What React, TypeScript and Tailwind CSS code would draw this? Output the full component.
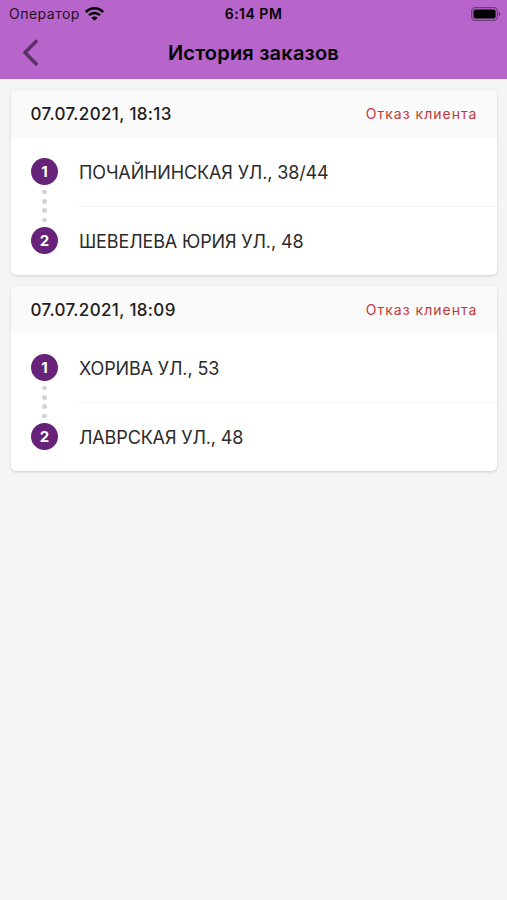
const orders = [
  {
    date: '07.07.2021, 18:13',
    status: 'Отказ клиента',
    route: ['ПОЧАЙНИНСКАЯ УЛ., 38/44', 'ШЕВЕЛЕВА ЮРИЯ УЛ., 48'],
  },
  {
    date: '07.07.2021, 18:09',
    status: 'Отказ клиента',
    route: ['ХОРИВА УЛ., 53', 'ЛАВРСКАЯ УЛ., 48'],
  },
]

type Order = (typeof orders)[number]

function WifiIcon() {
  return (
    <svg width="19" height="14" viewBox="0 0 19 14" fill="none" stroke="#000">
      <path d="M0.9 5C5.6 0 13.4 0 18.1 5" strokeWidth="2.6" />
      <path d="M4 8.2C7.1 5.2 11.9 5.2 15 8.2" strokeWidth="2.4" />
      <path d="M6.4 10.7C8.2 9.1 10.8 9.1 12.6 10.7L9.5 13.7Z" fill="#000" stroke="none" />
    </svg>
  )
}

function BatteryIcon() {
  return (
    <svg width="31" height="14" viewBox="0 0 31 14" fill="none">
      <rect x="0.6" y="0.6" width="25.8" height="12.8" rx="3.6" stroke="#000" strokeOpacity="0.4" strokeWidth="1.2" />
      <rect x="2.4" y="2.4" width="22.2" height="9.2" rx="2" fill="#000" />
      <path d="M27.8 4.8C29.8 5.5 29.8 8.5 27.8 9.2Z" fill="#000" fillOpacity="0.45" />
    </svg>
  )
}

function StatusBar() {
  return (
    <div className="grid h-[27px] grid-cols-[1fr_80px_1fr] items-center pl-[9px] pr-[5px] text-sm text-black/85">
      <div className="flex items-center gap-[5px]">
        <span className="tracking-[0.5px]">Оператор</span>
        <WifiIcon />
      </div>
      <div className="-ml-[4px] pt-px text-center text-sm font-semibold tracking-[0.5px] text-black">6:14 PM</div>
      <div className="flex justify-end">
        <BatteryIcon />
      </div>
    </div>
  )
}

function Header() {
  return (
    <header className="h-[79px] bg-[#b765cb]">
      <StatusBar />
      <div className="grid h-[51px] grid-cols-[60px_1fr_60px] items-center">
        <button className="pl-[22px]" aria-label="Назад">
          <svg width="18" height="28" viewBox="0 0 18 28" fill="none">
            <path d="M14 2.5L3 13.5L14 24.8" stroke="#5c3069" strokeWidth="3.6" strokeLinecap="round" strokeLinejoin="round" />
          </svg>
        </button>
        <h1 className="text-center text-[20px] font-semibold tracking-[0.2px] text-black">История заказов</h1>
      </div>
    </header>
  )
}

function Marker({ value }: { value: number }) {
  return (
    <div className="flex size-[27px] shrink-0 items-center justify-center rounded-full bg-[#662379] pt-px text-[15px] font-bold text-white">
      {value}
    </div>
  )
}

function OrderCard({ order }: { order: Order }) {
  return (
    <div className="h-[185px] overflow-hidden rounded-[5px] bg-white shadow-[0_1px_3px_rgba(0,0,0,0.16)]">
      <div className="flex h-[48px] items-center justify-between bg-[#fafafa] pl-[19.5px] pr-[19.5px]">
        <span className="pt-px text-[17px] font-medium tracking-[0.34px] text-[#202020]">{order.date}</span>
        <span className="text-sm tracking-[1.02px] text-[#c4373c]">{order.status}</span>
      </div>
      <div className="flex pl-5">
        <div className="flex w-[27px] flex-col items-center pt-[20px]">
          <Marker value={1} />
          <div className="flex h-[42px] flex-col items-center gap-[4.8px] pt-[5px]">
            {[0, 1, 2, 3].map((dot) => (
              <span key={dot} className="size-[4.4px] rounded-full bg-[#d3d3d3]" />
            ))}
          </div>
          <Marker value={2} />
        </div>
        <div className="ml-[21px] flex-1">
          {order.route.map((address, i) => (
            <div
              key={address}
              className={`flex h-[69px] items-center text-[18px] tracking-[-0.13px] text-[#2b2b2b] ${
                i === 0 ? 'border-b border-[#f5f5f5]' : ''
              }`}
            >
              {address}
            </div>
          ))}
        </div>
      </div>
    </div>
  )
}

export default function App() {
  return (
    <div className="min-h-screen bg-[#f5f5f5] font-['Inter',sans-serif]">
      <Header />
      <main className="flex flex-col gap-[11px] pb-4 pl-[11px] pr-[10px] pt-[11px]">
        {orders.map((order) => (
          <OrderCard key={order.date} order={order} />
        ))}
      </main>
    </div>
  )
}
